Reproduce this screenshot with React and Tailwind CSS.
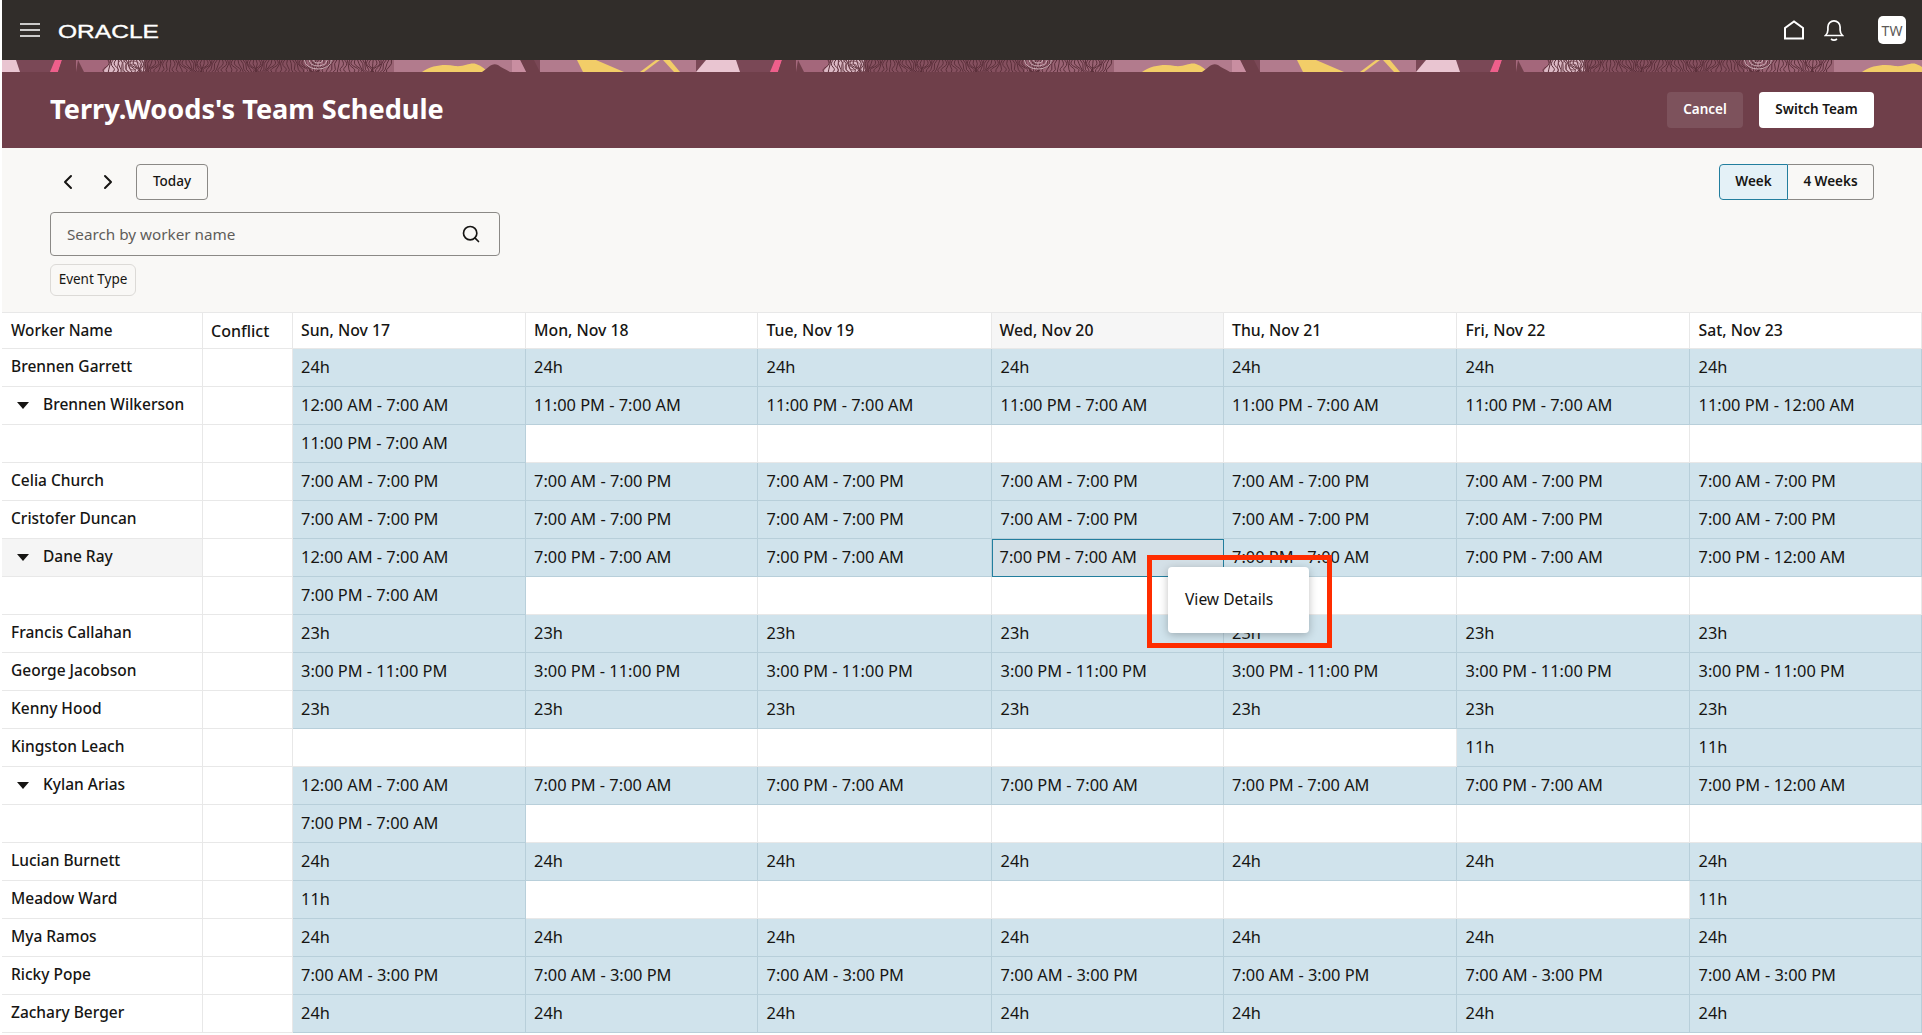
import React from "react";
import { ChevronLeft, ChevronRight, Search } from "lucide-react";

const COLS = "grid grid-cols-[200.5px_90px_233px_232.5px_234px_231.5px_233.5px_233px_232px]";

const rep = (v) => Array(7).fill(v);
const blanks = (first) => [first, "", "", "", "", "", ""];

const DAY = "7:00 PM - 7:00 AM";
const rows = [
  { name: "Brennen Garrett", cells: rep("24h") },
  { name: "Brennen Wilkerson", caret: true, cells: ["12:00 AM - 7:00 AM", ...Array(5).fill("11:00 PM - 7:00 AM"), "11:00 PM - 12:00 AM"] },
  { name: "", cells: blanks("11:00 PM - 7:00 AM") },
  { name: "Celia Church", cells: rep("7:00 AM - 7:00 PM") },
  { name: "Cristofer Duncan", cells: rep("7:00 AM - 7:00 PM") },
  { name: "Dane Ray", caret: true, hover: true, cells: ["12:00 AM - 7:00 AM", ...Array(5).fill(DAY), "7:00 PM - 12:00 AM"] },
  { name: "", cells: blanks(DAY) },
  { name: "Francis Callahan", cells: rep("23h") },
  { name: "George Jacobson", cells: rep("3:00 PM - 11:00 PM") },
  { name: "Kenny Hood", cells: rep("23h") },
  { name: "Kingston Leach", cells: ["", "", "", "", "", "11h", "11h"] },
  { name: "Kylan Arias", caret: true, cells: ["12:00 AM - 7:00 AM", ...Array(5).fill(DAY), "7:00 PM - 12:00 AM"] },
  { name: "", cells: blanks(DAY) },
  { name: "Lucian Burnett", cells: rep("24h") },
  { name: "Meadow Ward", cells: ["11h", "", "", "", "", "", "11h"] },
  { name: "Mya Ramos", cells: rep("24h") },
  { name: "Ricky Pope", cells: rep("7:00 AM - 3:00 PM") },
  { name: "Zachary Berger", cells: rep("24h") },
];

const days = ["Sun, Nov 17", "Mon, Nov 18", "Tue, Nov 19", "Wed, Nov 20", "Thu, Nov 21", "Fri, Nov 22", "Sat, Nov 23"];

// fingerprint lines for the banner strip
const printLines = [];
for (let x = 108; x < 394; x += 2.6) {
  const a = Math.sin(x * 0.37) * 4;
  const b = Math.sin(x * 0.11) * 6;
  printLines.push(`M${x.toFixed(1)} 0 Q${(x + a).toFixed(1)} 4 ${(x + b * 0.5).toFixed(1)} 7 T${(x + b).toFixed(1)} 12`);
}

function BannerStrip() {
  return (
    <svg className="block h-[12px] w-full" aria-hidden="true">
      <defs>
        <pattern id="strip" width="720" height="12" patternUnits="userSpaceOnUse" patternTransform="translate(-2 0)">
          <rect width="720" height="12" fill="#7a4856" />
          <polygon points="0,0 16,0 20,12 0,12" fill="#e9c5d1" />
          <polygon points="55,0 62,0 58,12 50,12" fill="#ee5f8b" />
          <polygon points="62,0 78,0 84,12 58,12" fill="#6f3f4a" />
          <rect x="76" y="0" width="32" height="12" fill="#a4677b" />
          <polygon points="78,0 84,12 76,12" fill="#6f3f4a" />
          <rect x="108" y="0" width="286" height="12" fill="#9a6374" />
          <polygon points="112,0 145,0 145,12 103,12" fill="#dcb9c5" />
          <rect x="145" y="0" width="160" height="12" fill="#85505f" />
          {printLines.map((d, i) => (
            <path key={i} d={d} fill="none" stroke="#5a2e39" strokeWidth="1" />
          ))}
          {[3, 6, 9, 12].map((r) => (
            <ellipse key={r} cx="133" cy="7" rx={r * 1.3} ry={r} fill="none" stroke="#6f3f4a" strokeWidth="0.8" />
          ))}
          {[3, 6, 9].map((r) => (
            <ellipse key={r} cx="318" cy="0" rx={r * 1.5} ry={r} fill="none" stroke="#e8d2d9" strokeWidth="0.7" />
          ))}
          <rect x="394" y="0" width="132" height="12" fill="#b27b8d" />
          <path d="M422 12 C432 5 445 4 455 6 C465 7 470 2 476 4 C482 6 486 10 488 12 Z" fill="#f2cd68" />
          <path d="M482 12 C488 8 492 2 498 5 C502 8 505 9 510 12 Z" fill="#6f3f4a" />
          <polygon points="520,0 534,0 540,12 526,12" fill="#6f3f4a" />
          <polygon points="512,0 520,0 526,12 512,12" fill="#c98ea1" />
          <rect x="540" y="0" width="156" height="12" fill="#b27b8d" />
          <polygon points="577,0 596,0 624,12 583,12" fill="#f2cd68" />
          <polygon points="640,12 656,0 660,0 644,12" fill="#f2cd68" />
          <polygon points="663,0 670,0 680,12 674,12" fill="#f2cd68" />
          <polygon points="706,0 720,0 720,12 696,12" fill="#e9c5d1" />
        </pattern>
      </defs>
      <rect width="100%" height="12" fill="url(#strip)" />
    </svg>
  );
}

function HeaderBar() {
  return (
    <header className="flex h-[60px] items-center justify-between bg-[#312d2a] pl-[18px] pr-[16px]">
      <div className="flex items-center">
        <svg width="20" height="14" viewBox="0 0 20 14" aria-hidden="true">
          <path d="M0 1h20M0 7h20M0 13h20" stroke="#fff" strokeWidth="1.6" />
        </svg>
        <svg width="106" height="22" viewBox="0 0 106 22" className="ml-[18px] mt-[1px]" role="img" aria-label="Oracle">
          <text x="0" y="17.5" fill="#fff" stroke="#fff" strokeWidth="0.35" fontFamily="Liberation Sans" fontSize="18.5" textLength="101" lengthAdjust="spacingAndGlyphs">ORACLE</text>
        </svg>
      </div>
      <div className="flex items-center">
        <svg width="22" height="20" viewBox="0 0 22 20" fill="none" stroke="#fff" strokeWidth="2" aria-hidden="true">
          <path d="M2 18.5V8l9-6.6L20 8v10.5z" />
        </svg>
        <svg width="20" height="22" viewBox="0 0 20 22" fill="none" stroke="#fff" strokeWidth="1.7" className="ml-[19px]" aria-hidden="true">
          <path d="M1.5 16.5h17c-1.6-1.6-2.4-3-2.4-5.5V8A6.1 6.1 0 0 0 3.9 8v3c0 2.5-.8 3.9-2.4 5.5z" />
          <path d="M7 20c1.6 1.2 4.4 1.2 6 0" />
        </svg>
        <div className="ml-[34px] flex h-[28px] w-[28px] items-center justify-center rounded-[5px] bg-white text-[14px] text-[#5c5a58]">TW</div>
      </div>
    </header>
  );
}

function Toolbar() {
  return (
    <div className="h-[164px] bg-[#f9f8f6] pl-[48px] pr-[48px] pt-[16px] text-[#161513]">
      <div className="flex items-center justify-between">
        <div className="flex items-center">
          <ChevronLeft size={24} strokeWidth={2} className="ml-[6px]" />
          <ChevronRight size={24} strokeWidth={2} className="ml-[16px]" />
          <button className="ml-[16px] h-[36px] w-[72px] rounded-[4px] border border-[#8b8986] pb-[2px] text-[13.5px] font-medium">Today</button>
        </div>
        <div className="flex h-[36px] text-[13.5px] font-semibold">
          <button className="w-[69px] rounded-l-[4px] border border-[#227e9e] bg-[#e4f1f7] pb-[2px]">Week</button>
          <button className="w-[86px] rounded-r-[4px] border border-l-0 border-[#8b8986] pb-[2px]">4 Weeks</button>
        </div>
      </div>
      <div className="mt-[12px] flex h-[44px] w-[450px] items-center justify-between rounded-[4px] border border-[#8b8986] pl-[16px] pr-[18px] text-[15.25px] text-[#5f5d5a]">
        <span>Search by worker name</span>
        <Search size={20} strokeWidth={2} className="text-[#161513]" />
      </div>
      <button className="mt-[8px] block h-[32px] w-[86px] rounded-[6px] border border-[#dcdad7] pb-[2px] text-[13.5px]">Event Type</button>
    </div>
  );
}

function WorkerCell({ row }) {
  return (
    <div className={`flex items-center border-b border-r border-[#e8e8e8] pb-[1px] pl-[9px] text-[15.5px] font-medium ${row.hover ? "bg-[#f5f5f5]" : ""}`}>
      {row.caret && (
        <svg width="12" height="7" viewBox="0 0 12 7" className="ml-[6px] mr-[14px] shrink-0" aria-hidden="true">
          <polygon points="0,0 12,0 6,7" fill="#161513" />
        </svg>
      )}
      {row.name}
    </div>
  );
}

function ShiftCell({ value, selected }) {
  if (selected) {
    return <div className="flex items-center border border-[#227e9e] bg-[#d4e0e7] pb-[1px] pl-[6.5px] text-[16.4px]">{value}</div>;
  }
  if (!value) return <div className="border-b border-r border-[#e8e8e8]" />;
  return <div className="flex items-center border-b border-r border-[#b8cfda] bg-[#d0e3ec] pb-[1px] pl-[8.5px] text-[16.4px]">{value}</div>;
}

function ScheduleTable() {
  return (
    <div className="relative border-t border-[#e8e8e8] text-[16px] text-[#161513]">
      <div className={`${COLS} h-[36px] font-medium`}>
        <div className="flex items-center border-b border-r border-[#e8e8e8] pl-[9px] text-[15.3px]">Worker Name</div>
        <div className="flex items-center border-b border-r border-[#e8e8e8] pl-[8.5px]">Conflict</div>
        {days.map((d, i) => (
          <div key={d} className={`flex items-center border-b border-r border-[#e8e8e8] text-[15.8px] ${i === 3 ? "bg-[#f6f6f6] pl-[7.5px]" : "pl-[8.5px]"}`}>{d}</div>
        ))}
      </div>
      {rows.map((row, r) => (
        <div key={r} className={`${COLS} h-[38px]`}>
          <WorkerCell row={row} />
          <div className="border-b border-r border-[#e8e8e8]" />
          {row.cells.map((c, i) => (
            <ShiftCell key={i} value={c} selected={r === 5 && i === 3} />
          ))}
        </div>
      ))}
      {/* context menu and the red callout around it */}
      <div className="absolute left-[1166px] top-[254px] flex h-[66px] w-[141px] items-center rounded-[4px] bg-white pb-[1px] pl-[17px] text-[15.6px] shadow-[0_2px_8px_rgba(0,0,0,0.25)]">
        View Details
      </div>
      <div className="absolute left-[1145px] top-[242px] h-[93px] w-[185px] border-[5px] border-[#ff2d00]" />
    </div>
  );
}

export default function App() {
  return (
    <div className="h-[1035px] overflow-hidden bg-white pl-[2px] font-['Noto_Sans',sans-serif]">
      <HeaderBar />
      <BannerStrip />
      <div className="flex h-[76px] items-center justify-between bg-[#6f3f4a] pl-[48px] pr-[48px]">
        <h1 className="pb-[2px] text-[27.15px] font-bold text-white">Terry.Woods's Team Schedule</h1>
        <div className="flex items-center gap-[16px] text-[13.5px] font-semibold">
          <button className="h-[36px] w-[76px] rounded-[4px] bg-[#7d525c] pb-[2px] text-white">Cancel</button>
          <button className="h-[36px] w-[115px] rounded-[4px] bg-white pb-[2px] text-[#161513]">Switch Team</button>
        </div>
      </div>
      <Toolbar />
      <ScheduleTable />
    </div>
  );
}
